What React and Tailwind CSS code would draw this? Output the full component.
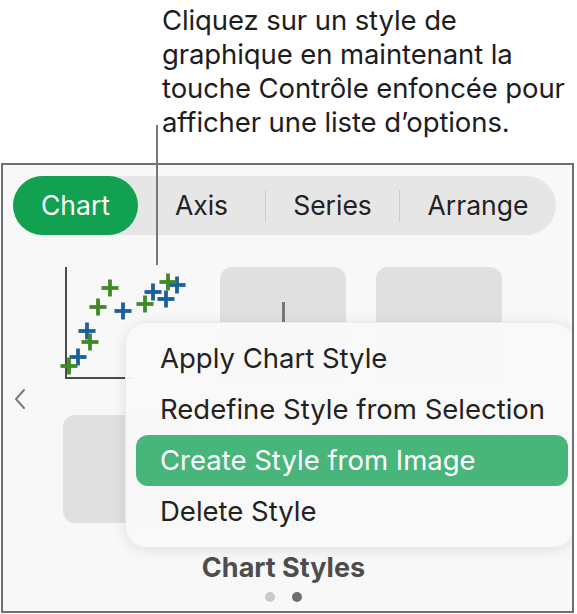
import React from "react";

const font = { fontFamily: "Inter, 'Liberation Sans', sans-serif" };

const greens = [
  [110, 289],
  [98, 308],
  [90, 343],
  [69, 367],
  [145, 305],
  [168, 283],
];
const blues = [
  [123, 312],
  [87, 332],
  [78, 358],
  [153, 293],
  [166, 300],
  [177, 286],
];

function Plus({ x, y, color }) {
  // coords are page coords, svg origin sits at (62, 268)
  const cx = x - 62;
  const cy = y - 268;
  return (
    <g stroke={color} strokeWidth="3.8">
      <line x1={cx - 8.5} y1={cy} x2={cx + 8.5} y2={cy} />
      <line x1={cx} y1={cy - 8.5} x2={cx} y2={cy + 8.5} />
    </g>
  );
}

function ScatterThumb() {
  return (
    <div className="w-[128px] h-[115px]">
      <svg width="128" height="115" viewBox="0 0 128 115" overflow="visible">
        <path d="M4 0 V111 H70" fill="none" stroke="#4a4a4a" strokeWidth="2" />
        {blues.map(([x, y], i) => (
          <Plus key={"b" + i} x={x} y={y} color="#1d5f9b" />
        ))}
        {greens.map(([x, y], i) => (
          <Plus key={"g" + i} x={x} y={y} color="#3f8a27" />
        ))}
      </svg>
    </div>
  );
}

const menuItems = [
  "Apply Chart Style",
  "Redefine Style from Selection",
  "Create Style from Image",
  "Delete Style",
];

export default function App() {
  return (
    <div className="relative w-[577px] h-[614px] bg-white overflow-hidden" style={font}>
      {/* callout */}
      <div className="pl-[162px] pt-[3px] h-[163px] text-[27.5px] leading-[34px] text-[#1d1d1f] tracking-[-0.1px]">
        <p>Cliquez sur un style de</p>
        <p>graphique en maintenant la</p>
        <p>touche Contrôle enfoncée pour</p>
        <p>afficher une liste d’options.</p>
      </div>

      {/* panel */}
      <div className="ml-px w-[573px] h-[450px] border-2 border-[#6f6f6f] bg-[#f8f8f8] relative overflow-hidden">
        {/* tabs */}
        <div className="mt-[11px] ml-[10px] w-[543px] h-[59px] rounded-full bg-[#e6e6e6] flex items-center text-[26.5px] text-[#222]">
          <div className="w-[125px] h-[59px] rounded-full bg-[#12a150] text-white flex items-center justify-center">
            Chart
          </div>
          <div className="w-[127px] text-center">Axis</div>
          <div className="w-px h-[32px] bg-[#cdcdcd]" />
          <div className="w-[133px] text-center">Series</div>
          <div className="w-px h-[32px] bg-[#cdcdcd]" />
          <div className="flex-1 text-center">Arrange</div>
        </div>

        {/* style thumbnails */}
        <div className="flex items-start gap-[30px] ml-[59px] mt-[32px]">
          <ScatterThumb />
          <div className="w-[126px] h-[115px] rounded-[12px] bg-[#e0e0e0] relative">
            <div className="absolute left-[62px] top-[35px] w-[3px] h-[20px] bg-[#777]" />
          </div>
          <div className="w-[126px] h-[115px] rounded-[12px] bg-[#e0e0e0]" />
        </div>

        <div className="flex items-start mt-[33px]">
          <div className="w-[60px] pl-[10px] -mt-[27px]">
            <svg width="14" height="22" viewBox="0 0 14 22">
              <path d="M11 2 L3 11 L11 20" fill="none" stroke="#7a7a7a" strokeWidth="2" strokeLinecap="round" strokeLinejoin="round" />
            </svg>
          </div>
          <div className="w-[126px] h-[108px] rounded-[12px] bg-[#e0e0e0]" />
        </div>

        <div className="mt-[29px] text-center text-[27px] font-bold text-[#4d4d4d] pr-[8px] leading-[32px]">
          Chart Styles
        </div>
        <div className="flex justify-center gap-[17px] mt-[8px] pr-[9px]">
          <div className="w-[10px] h-[10px] rounded-full bg-[#c9c9c9]" />
          <div className="w-[10px] h-[10px] rounded-full bg-[#6e6e6e]" />
        </div>

        {/* context menu */}
        <div className="absolute left-[122px] top-[157px] w-[450px] py-[10px] rounded-[22px] bg-[#f9f9f9]/95 shadow-[0_2px_14px_rgba(0,0,0,0.10)] border border-[#ececec] text-[27.5px] text-[#222]">
          {menuItems.map((item) => (
            <div
              key={item}
              className={
                item === "Create Style from Image"
                  ? "ml-[10px] mr-[6px] h-[51px] rounded-[12px] bg-[#48b57b] text-white flex items-center pl-[24px]"
                  : "ml-[10px] mr-[6px] h-[51px] flex items-center pl-[24px]"
              }
            >
              {item}
            </div>
          ))}
        </div>
      </div>

      {/* callout line */}
      <div className="absolute left-[156px] top-[125px] w-[2px] h-[140px] bg-[#777]" />
    </div>
  );
}
